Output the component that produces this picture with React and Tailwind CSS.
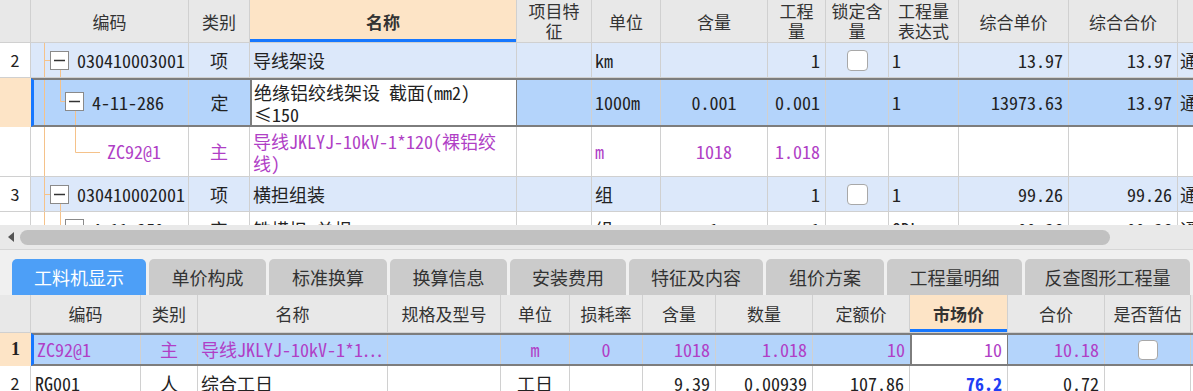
import React from 'react';

const MONO = "font-['Noto_Sans_Mono_CJK_SC','Liberation_Mono','Noto_Sans_CJK_SC',monospace]";
const SANS = "font-['Noto_Sans_CJK_SC','Noto_Sans',sans-serif]";
const ORANGE = '#f5c28a';

const TW = ['w-[31px]', 'w-[158px]', 'w-[61px]', 'w-[267px]', 'w-[75px]', 'w-[69px]', 'w-[107px]', 'w-[58px]', 'w-[63px]', 'w-[70px]', 'w-[110px]', 'w-[109px]', 'w-[120px]'];
const BW = ['w-[31px]', 'w-[110px]', 'w-[57px]', 'w-[190px]', 'w-[113px]', 'w-[69px]', 'w-[73px]', 'w-[73px]', 'w-[97px]', 'w-[97px]', 'w-[98px]', 'w-[97px]', 'w-[86px]', 'w-[40px]'];

function Cell({ w, className = '', children }) {
  return (
    <div className={`${w} shrink-0 h-full border-r border-[#d0d0d0] flex items-center overflow-hidden whitespace-nowrap ${className}`}>
      {children}
    </div>
  );
}

function Check() {
  return <div className="w-[21px] h-[21px] rounded-[4px] border border-[#a8a8a8] bg-white" />;
}

function Box({ x, y }) {
  return (
    <g>
      <rect x={x + 0.5} y={y + 0.5} width="18" height="18" fill="white" stroke="#8a8a8a" />
      <line x1={x + 4} x2={x + 15} y1={y + 9.5} y2={y + 9.5} stroke="#333" strokeWidth="1.5" />
    </g>
  );
}

// tree connector lines drawn inside the 编码 cell
function Tree({ kind }) {
  return (
    <svg className="absolute inset-0 w-full h-full" fill="none" stroke={ORANGE} strokeWidth="1">
      {kind === 'l1' && (
        <>
          <line x1="13.5" x2="13.5" y1="0" y2="50" />
          <line x1="13.5" x2="19" y1="17.5" y2="17.5" />
          <line x1="29.5" x2="29.5" y1="27" y2="40" />
          <Box x={19} y={8} />
        </>
      )}
      {kind === 'sel' && (
        <>
          <line x1="10.5" x2="10.5" y1="0" y2="50" />
          <line x1="26.5" x2="26.5" y1="0" y2="21.5" />
          <line x1="26.5" x2="31" y1="21.5" y2="21.5" />
          <line x1="41.5" x2="41.5" y1="30" y2="50" />
          <Box x={31} y={12} />
        </>
      )}
      {kind === 'leaf' && (
        <>
          <line x1="13.5" x2="13.5" y1="0" y2="50" />
          <line x1="44.5" x2="44.5" y1="0" y2="25.5" />
          <line x1="44.5" x2="69" y1="25.5" y2="25.5" />
        </>
      )}
      {kind === 'part' && (
        <>
          <line x1="13.5" x2="13.5" y1="0" y2="50" />
          <line x1="29.5" x2="29.5" y1="0" y2="16.5" />
          <line x1="29.5" x2="34" y1="16.5" y2="16.5" />
          <Box x={34} y={7} />
        </>
      )}
    </svg>
  );
}

function TopHeader() {
  const heads = ['', '编码', '类别', '名称', ['项目特', '征'], '单位', '含量', ['工程', '量'], ['锁定含', '量'], ['工程量', '表达式'], '综合单价', '综合合价', ''];
  return (
    <div className={`flex h-[43px] border-b border-[#d0d0d0] bg-[#e8e8e8] text-[#333] text-[17px] ${SANS}`}>
      {heads.map((h, i) => (
        <Cell
          key={i}
          w={TW[i]}
          className={`justify-center text-center leading-[20px] ${i === 3 ? 'bg-[#fde4c6] font-bold shadow-[inset_0_-3px_0_#1677ff]' : ''}`}
        >
          {Array.isArray(h) ? (
            <div>
              <div>{h[0]}</div>
              <div>{h[1]}</div>
            </div>
          ) : (
            <span className="pt-[2px]">{h}</span>
          )}
        </Cell>
      ))}
    </div>
  );
}

function ItemRow({ no, code, name, unit, price }) {
  return (
    <div className={`flex h-[35px] border-b border-[#d0d0d0] bg-[#dce8fa] text-[#222] text-[18px] ${MONO}`}>
      <Cell w={TW[0]} className={`bg-white justify-center text-[16px] ${SANS}`}>{no}</Cell>
      <Cell w={TW[1]} className="relative pl-[46px]">
        <Tree kind="l1" />
        <span className="relative">{code}</span>
      </Cell>
      <Cell w={TW[2]} className="justify-center">项</Cell>
      <Cell w={TW[3]} className="pl-[3px]">{name}</Cell>
      <Cell w={TW[4]} />
      <Cell w={TW[5]} className="pl-[3px]">{unit}</Cell>
      <Cell w={TW[6]} />
      <Cell w={TW[7]} className="justify-end pr-[5px]">1</Cell>
      <Cell w={TW[8]} className="justify-center"><Check /></Cell>
      <Cell w={TW[9]} className="pl-[3px]">1</Cell>
      <Cell w={TW[10]} className="justify-end pr-[5px]">{price}</Cell>
      <Cell w={TW[11]} className="justify-end pr-[5px]">{price}</Cell>
      <Cell w={TW[12]} className="pl-[2px]">通用安装工程</Cell>
    </div>
  );
}

function TopTable() {
  return (
    <div className="h-[225px] overflow-hidden">
      <TopHeader />
      <ItemRow no="2" code="030410003001" name="导线架设" unit="km" price="13.97" />

      <div className={`flex h-[49px] text-[#222] text-[18px] ${MONO}`}>
        <Cell w={TW[0]} className="bg-[#fde4c6] border-r-0" />
        <div className="flex h-full border-l-[3px] border-l-[#1677ff] border-y-2 border-y-[#7d7d7d] bg-[#b4d4fb]">
          <Cell w="w-[155px]" className="relative pl-[58px]">
            <Tree kind="sel" />
            <span className="relative">4-11-286</span>
          </Cell>
          <Cell w={TW[2]} className="justify-center border-r-0">定</Cell>
          <Cell w={TW[3]} className="bg-white border-x-2 border-x-[#7d7d7d] pl-[2px] leading-[22px]">
            <div>
              <div>绝缘铝绞线架设 截面(mm2)</div>
              <div>≤150</div>
            </div>
          </Cell>
          <Cell w={TW[4]} />
          <Cell w={TW[5]} className="pl-[3px]">1000m</Cell>
          <Cell w={TW[6]} className="justify-center">0.001</Cell>
          <Cell w={TW[7]} className="justify-end pr-[5px]">0.001</Cell>
          <Cell w={TW[8]} />
          <Cell w={TW[9]} className="pl-[3px]">1</Cell>
          <Cell w={TW[10]} className="justify-end pr-[5px]">13973.63</Cell>
          <Cell w={TW[11]} className="justify-end pr-[5px]">13.97</Cell>
          <Cell w={TW[12]} className="pl-[2px]">通用安装工程</Cell>
        </div>
      </div>

      <div className={`flex h-[50px] border-b border-[#d0d0d0] bg-white text-[#b03fc6] text-[18px] ${MONO}`}>
        <Cell w={TW[0]} />
        <Cell w={TW[1]} className="relative pl-[76px]">
          <Tree kind="leaf" />
          <span className="relative">ZC92@1</span>
        </Cell>
        <Cell w={TW[2]} className="justify-center">主</Cell>
        <Cell w={TW[3]} className="pl-[3px] leading-[22px]">
          <div>
            <div>导线JKLYJ-10kV-1*120(裸铝绞</div>
            <div>线)</div>
          </div>
        </Cell>
        <Cell w={TW[4]} />
        <Cell w={TW[5]} className="pl-[3px]">m</Cell>
        <Cell w={TW[6]} className="justify-center">1018</Cell>
        <Cell w={TW[7]} className="justify-end pr-[5px]">1.018</Cell>
        <Cell w={TW[8]} />
        <Cell w={TW[9]} />
        <Cell w={TW[10]} />
        <Cell w={TW[11]} />
        <Cell w={TW[12]} />
      </div>

      <ItemRow no="3" code="030410002001" name="横担组装" unit="组" price="99.26" />

      <div className={`flex h-[35px] border-b border-[#d0d0d0] bg-white text-[#222] text-[18px] ${MONO}`}>
        <Cell w={TW[0]} />
        <Cell w={TW[1]} className="relative pl-[61px]">
          <Tree kind="part" />
          <span className="relative">4-11-259</span>
        </Cell>
        <Cell w={TW[2]} className="justify-center">定</Cell>
        <Cell w={TW[3]} className="pl-[3px]">铁横担 单根</Cell>
        <Cell w={TW[4]} />
        <Cell w={TW[5]} className="pl-[3px]">组</Cell>
        <Cell w={TW[6]} className="justify-center">1</Cell>
        <Cell w={TW[7]} className="justify-end pr-[5px]">1</Cell>
        <Cell w={TW[8]} />
        <Cell w={TW[9]} className="pl-[3px]">QDL</Cell>
        <Cell w={TW[10]} className="justify-end pr-[5px]">99.26</Cell>
        <Cell w={TW[11]} className="justify-end pr-[5px]">99.26</Cell>
        <Cell w={TW[12]} className="pl-[2px]">通用安装工程</Cell>
      </div>
    </div>
  );
}

function ScrollBar() {
  return (
    <div className="h-[25px] flex items-center bg-[#e9e9e9] border-b border-[#d6d6d6]">
      <div className="w-[20px] flex justify-center pl-[2px]">
        <div className="w-0 h-0 border-y-[5px] border-y-transparent border-r-[6px] border-r-[#555]" />
      </div>
      <div className="w-[1090px] h-[15px] rounded-full bg-[#c1c1c1]" />
    </div>
  );
}

function Tabs() {
  const tabs = [
    ['工料机显示', 'w-[134px]'],
    ['单价构成', 'w-[117px]'],
    ['标准换算', 'w-[118px]'],
    ['换算信息', 'w-[117px]'],
    ['安装费用', 'w-[116px]'],
    ['特征及内容', 'w-[134px]'],
    ['组价方案', 'w-[118px]'],
    ['工程量明细', 'w-[135px]'],
    ['反查图形工程量', 'w-[165px]'],
  ];
  return (
    <div className={`h-[45px] flex items-end gap-[3px] pl-[12px] bg-[#f0f0f0] text-[18px] ${SANS}`}>
      {tabs.map(([t, w], i) => (
        <div
          key={t}
          className={`${w} h-[36px] shrink-0 rounded-t-[5px] flex items-center justify-center ${i === 0 ? 'bg-[#4d9ff7] text-white' : 'bg-[#cbcbcb] text-[#333]'}`}
        >
          {t}
        </div>
      ))}
    </div>
  );
}

function BottomTable() {
  const heads = ['', '编码', '类别', '名称', '规格及型号', '单位', '损耗率', '含量', '数量', '定额价', '市场价', '合价', '是否暂估', ''];
  return (
    <div>
      <div className={`flex h-[38px] border-b border-[#d0d0d0] bg-[#e8e8e8] text-[#333] text-[17px] ${SANS}`}>
        {heads.map((h, i) => (
          <Cell
            key={i}
            w={BW[i]}
            className={`justify-center ${i === 10 ? 'bg-[#fde4c6] font-bold shadow-[inset_0_-3px_0_#1677ff]' : ''}`}
          >
            {h}
          </Cell>
        ))}
      </div>

      <div className={`flex h-[33px] text-[#b03fc6] text-[18px] ${MONO}`}>
        <Cell w={BW[0]} className="bg-[#fde4c6] border-r-0 justify-center font-['Liberation_Serif',serif] font-bold text-[#222] text-[18px]">1</Cell>
        <div className="flex h-full border-l-[3px] border-l-[#1677ff] border-y-2 border-y-[#7d7d7d] bg-[#b4d4fb]">
          <Cell w="w-[107px]" className="pl-[3px]">ZC92@1</Cell>
          <Cell w={BW[2]} className="justify-center">主</Cell>
          <Cell w={BW[3]} className="pl-[3px]">导线JKLYJ-10kV-1*1…</Cell>
          <Cell w={BW[4]} />
          <Cell w={BW[5]} className="justify-center">m</Cell>
          <Cell w={BW[6]} className="justify-center">0</Cell>
          <Cell w={BW[7]} className="justify-end pr-[5px]">1018</Cell>
          <Cell w={BW[8]} className="justify-end pr-[5px]">1.018</Cell>
          <Cell w={BW[9]} className="justify-end pr-[5px] border-r-0">10</Cell>
          <Cell w={BW[10]} className="justify-end pr-[5px] bg-white border-x-2 border-x-[#7d7d7d]">10</Cell>
          <Cell w={BW[11]} className="justify-end pr-[5px]">10.18</Cell>
          <Cell w={BW[12]} className="justify-center">
            <div className="w-[20px] h-[20px] rounded-[4px] border border-[#a8a8a8] bg-white" />
          </Cell>
          <Cell w={BW[13]} />
        </div>
      </div>

      <div className={`flex h-[35px] border-b border-[#d0d0d0] bg-white text-[#222] text-[18px] ${MONO}`}>
        <Cell w={BW[0]} className={`justify-center text-[16px] ${SANS}`}>2</Cell>
        <Cell w={BW[1]} className="pl-[4px]">RG001</Cell>
        <Cell w={BW[2]} className="justify-center">人</Cell>
        <Cell w={BW[3]} className="pl-[3px]">综合工日</Cell>
        <Cell w={BW[4]} />
        <Cell w={BW[5]} className="justify-center">工日</Cell>
        <Cell w={BW[6]} />
        <Cell w={BW[7]} className="justify-end pr-[5px]">9.39</Cell>
        <Cell w={BW[8]} className="justify-end pr-[5px]">0.00939</Cell>
        <Cell w={BW[9]} className="justify-end pr-[5px]">107.86</Cell>
        <Cell w={BW[10]} className="justify-end pr-[5px] font-bold text-[#1f3ff5]">76.2</Cell>
        <Cell w={BW[11]} className="justify-end pr-[5px]">0.72</Cell>
        <Cell w={BW[12]} />
        <Cell w={BW[13]} />
      </div>
    </div>
  );
}

export default function App() {
  return (
    <div className="w-[1193px] h-[391px] overflow-hidden bg-white">
      <TopTable />
      <ScrollBar />
      <Tabs />
      <BottomTable />
    </div>
  );
}
